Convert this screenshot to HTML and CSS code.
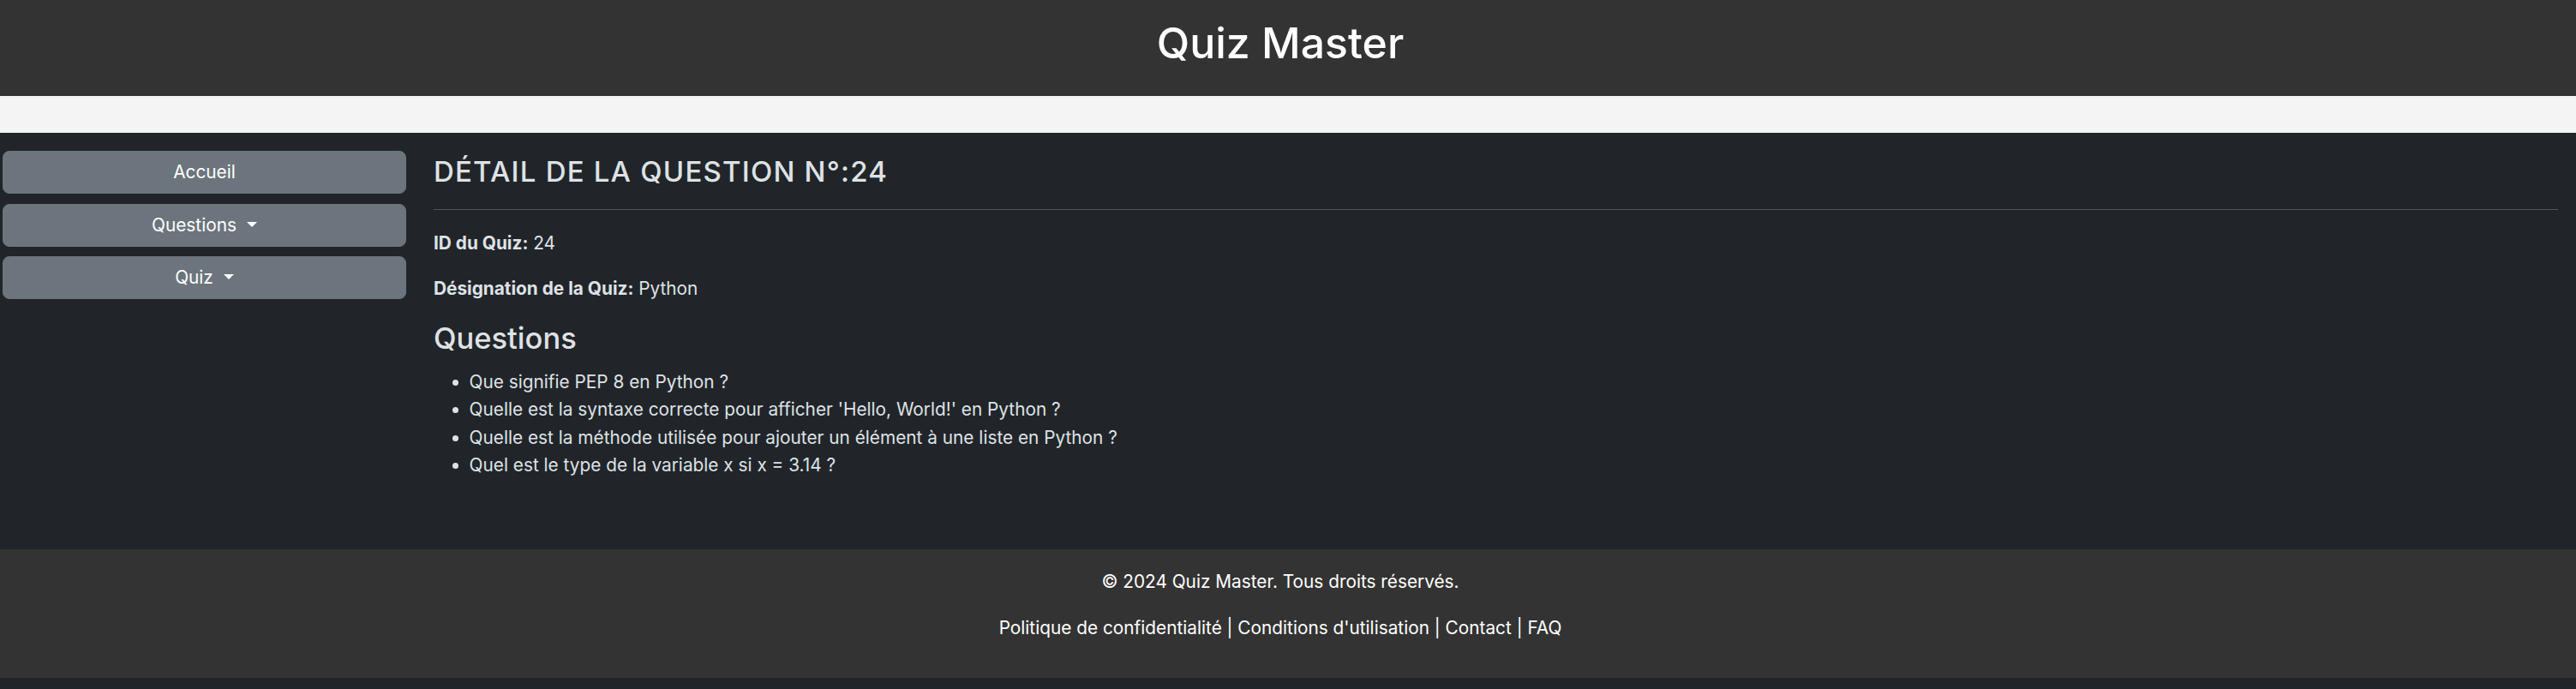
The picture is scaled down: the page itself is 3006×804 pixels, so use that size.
FILE: index.html
```html
<!DOCTYPE html>
<html lang="fr">
<head>
<meta charset="utf-8">
<title>Quiz Master</title>
<link rel="stylesheet" href="styles.css">
</head>
<body>
  <header class="site-header">
    <h1 class="site-title">Quiz Master</h1>
  </header>
  <div class="strip"></div>
  <main class="main">
    <nav class="sidebar">
      <a class="btn" href="#">Accueil</a>
      <a class="btn dropdown" href="#">Questions</a>
      <a class="btn dropdown" href="#">Quiz</a>
    </nav>
    <section class="content">
      <h2 class="page-title">DÉTAIL DE LA QUESTION N°:24</h2>
      <hr class="rule">
      <p class="field"><strong>ID du Quiz:</strong> 24</p>
      <p class="field"><strong>Désignation de la Quiz:</strong> Python</p>
      <h3 class="sub-title">Questions</h3>
      <ul class="question-list">
        <li>Que signifie PEP 8 en Python ?</li>
        <li>Quelle est la syntaxe correcte pour afficher 'Hello, World!' en Python ?</li>
        <li>Quelle est la méthode utilisée pour ajouter un élément à une liste en Python ?</li>
        <li>Quel est le type de la variable x si x = 3.14 ?</li>
      </ul>
    </section>
  </main>
  <footer class="site-footer">
    <p class="footer-line">© 2024 Quiz Master. Tous droits réservés.</p>
    <p class="footer-line">Politique de confidentialité | Conditions d'utilisation | Contact | FAQ</p>
  </footer>
</body>
</html>
```

FILE: styles.css
```css
* { box-sizing: border-box; }

html, body {
  margin: 0;
  padding: 0;
}

body {
  background: #212529;
  color: #dee2e6;
  font-family: Inter, "Noto Sans", "Liberation Sans", sans-serif;
  font-size: 20.8px;
  line-height: 1.5;
}

.site-header {
  background: #333333;
  color: #ffffff;
  text-align: center;
  padding: 20px 18px 21px 0;
}

.site-title {
  margin: 0 0 11px;
  font-size: 50px;
  font-weight: 500;
  line-height: 1.2;
}

.strip {
  height: 43px;
  background: #f4f4f4;
}

.main {
  display: flex;
  gap: 32px;
  padding: 21px 21px 61px 3px;
  background: #212529;
}

.sidebar {
  width: 471px;
  flex: none;
  display: flex;
  flex-direction: column;
  gap: 11.5px;
}

.btn {
  display: block;
  height: 50px;
  line-height: 48px;
  text-align: center;
  color: #ffffff;
  background: #6c757d;
  border: 1px solid #6c757d;
  border-radius: 7.8px;
  text-decoration: none;
  font-size: 20.8px;
}

.dropdown::after {
  content: "";
  display: inline-block;
  margin-left: 12px;
  vertical-align: 5px;
  border-top: 6.5px solid;
  border-right: 6px solid transparent;
  border-left: 6px solid transparent;
}

.content {
  flex: 1;
  min-width: 0;
}

.page-title {
  margin: 5px 0 0;
  font-size: 33px;
  font-weight: 500;
  line-height: 1.2;
  letter-spacing: 1.2px;
}

.rule {
  margin: 23px 0 23.5px;
  border: 0;
  border-top: 1px solid rgba(222, 226, 230, 0.25);
}

.field {
  margin: 0 0 22px;
}

.field strong {
  font-weight: 700;
}

.sub-title {
  margin: 4px 0 14px;
  font-size: 34.5px;
  font-weight: 500;
  line-height: 1.2;
}

.question-list {
  margin: 0 0 20.8px;
  padding-left: 41.6px;
  line-height: 32.4px;
}

.site-footer {
  background: #333333;
  color: #ffffff;
  text-align: center;
  padding: 22px 18px 19px 0;
  margin-bottom: 14px;
}

.footer-line {
  margin: 0 0 23px;
}
```
